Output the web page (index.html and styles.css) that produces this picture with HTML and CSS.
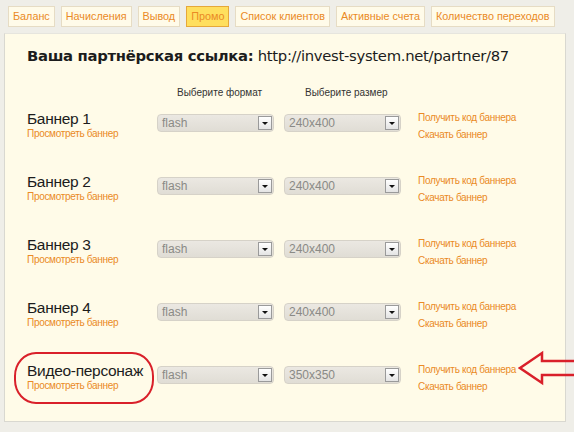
FILE: index.html
```html
<!DOCTYPE html>
<html lang="ru">

<head>
    <meta charset="UTF-8">
    <meta name="viewport" content="width=device-width, initial-scale=1.0">
    <title>Промо</title>
    <link rel="stylesheet" href="styles.css">
</head>

<body>
    <nav class="tabs">
        <a class="tab" href="#">Баланс</a>
        <a class="tab" href="#">Начисления</a>
        <a class="tab" href="#">Вывод</a>
        <a class="tab active" href="#">Промо</a>
        <a class="tab" href="#">Список клиентов</a>
        <a class="tab" href="#">Активные счета</a>
        <a class="tab" href="#">Количество переходов</a>
    </nav>
    <section class="panel">
        <h2 class="partner"><b>Ваша партнёрская ссылка:</b> http://invest-system.net/partner/87</h2>
        <div class="heads">
            <span class="head">Выберите формат</span>
            <span class="head">Выберите размер</span>
        </div>

        <div class="banner">
            <div class="name">
                <h3>Баннер 1</h3>
                <a href="#">Просмотреть баннер</a>
            </div>
            <div class="select"><span>flash</span><i class="btn"></i></div>
            <div class="select"><span>240x400</span><i class="btn"></i></div>
            <div class="links">
                <a href="#">Получить код баннера</a>
                <a href="#">Скачать баннер</a>
            </div>
        </div>

        <div class="banner">
            <div class="name">
                <h3>Баннер 2</h3>
                <a href="#">Просмотреть баннер</a>
            </div>
            <div class="select"><span>flash</span><i class="btn"></i></div>
            <div class="select"><span>240x400</span><i class="btn"></i></div>
            <div class="links">
                <a href="#">Получить код баннера</a>
                <a href="#">Скачать баннер</a>
            </div>
        </div>

        <div class="banner">
            <div class="name">
                <h3>Баннер 3</h3>
                <a href="#">Просмотреть баннер</a>
            </div>
            <div class="select"><span>flash</span><i class="btn"></i></div>
            <div class="select"><span>240x400</span><i class="btn"></i></div>
            <div class="links">
                <a href="#">Получить код баннера</a>
                <a href="#">Скачать баннер</a>
            </div>
        </div>

        <div class="banner">
            <div class="name">
                <h3>Баннер 4</h3>
                <a href="#">Просмотреть баннер</a>
            </div>
            <div class="select"><span>flash</span><i class="btn"></i></div>
            <div class="select"><span>240x400</span><i class="btn"></i></div>
            <div class="links">
                <a href="#">Получить код баннера</a>
                <a href="#">Скачать баннер</a>
            </div>
        </div>

        <div class="banner marked">
            <div class="name">
                <h3>Видео-персонаж</h3>
                <a href="#">Просмотреть баннер</a>
            </div>
            <div class="select"><span>flash</span><i class="btn"></i></div>
            <div class="select"><span>350x350</span><i class="btn"></i></div>
            <div class="links">
                <a href="#">Получить код баннера</a>
                <a href="#">Скачать баннер</a>
            </div>
            <svg class="arrow" width="60" height="36" viewBox="0 0 60 36">
                <path d="M2 18 L24 3 L24 11 L60 11 L60 25 L24 25 L24 33 Z" fill="none" stroke="#d9202a" stroke-width="2.5" stroke-linejoin="miter"/>
            </svg>
        </div>
    </section>
</body>

</html>
```

FILE: styles.css
```css
* {
    padding: 0;
    margin: 0;
    box-sizing: border-box;
}

body {
    width: 574px;
    height: 432px;
    overflow: hidden;
    background-color: #efeee8;
    font-family: "Liberation Sans", sans-serif;
    color: #222;
}

a {
    text-decoration: none;
    color: #ea8a25;
}

.tabs {
    display: flex;
    gap: 6px;
    padding: 6px 0 0 8px;
    height: 33px;
}

.tab {
    height: 21px;
    line-height: 19px;
    padding: 0 4px;
    font-size: 10.8px;
    white-space: nowrap;
    color: #ea8a25;
    background-color: #fffbe9;
    border: 1px solid #e6dcc4;
}

.tab.active {
    background-color: #ffdf5e;
    border-color: #e6a83a;
}

.panel {
    margin: 0 8px 0 4px;
    height: 389px;
    background-color: #fffbe8;
    border: 1px solid #d9d8d0;
    border-top-color: #e6e5de;
    padding: 12px 0 0 22px;
}

.partner {
    font-family: "DejaVu Sans", sans-serif;
    font-size: 14.8px;
    font-weight: normal;
    letter-spacing: -0.3px;
    line-height: 20px;
    color: #1c1c1c;
}

.partner b {
    font-weight: 700;
}

.heads {
    display: flex;
    padding: 21px 0 0 150px;
    height: 44px;
}

.head {
    width: 128px;
    font-size: 10px;
    color: #333;
}

.banner {
    position: relative;
    display: grid;
    grid-template-columns: 130px 127px 134px auto;
    height: 63px;
    align-items: start;
}

.name h3 {
    font-weight: normal;
    font-size: 15.5px;
    letter-spacing: -0.3px;
    line-height: 17px;
    color: #1c1c1c;
    white-space: nowrap;
}

.name a,
.links a {
    display: block;
    font-size: 10px;
    letter-spacing: -0.3px;
    line-height: 13px;
}

.select {
    display: flex;
    align-items: center;
    justify-content: space-between;
    width: 117px;
    height: 18px;
    margin-top: 4px;
    padding: 0 1px 0 4px;
    border: 1px solid #d6d2c8;
    border-radius: 4px;
    background: linear-gradient(#ebe8e2, #e0ddd5);
    font-size: 12px;
    color: #8a8a86;
}

.btn {
    position: relative;
    width: 14px;
    height: 14px;
    border: 1px solid #9a9a9a;
    background: linear-gradient(#ffffff, #e4e4e4);
}

.btn::after {
    content: "";
    position: absolute;
    left: 3px;
    top: 5px;
    border-left: 3px solid transparent;
    border-right: 3px solid transparent;
    border-top: 3px solid #111;
}

.links {
    display: flex;
    flex-direction: column;
    gap: 4px;
    padding-top: 1px;
}

.marked .name {
    position: relative;
}

.marked .name::before {
    content: "";
    position: absolute;
    left: -13px;
    top: -10px;
    width: 136px;
    height: 48px;
    border: 2px solid #d9202a;
    border-radius: 22px / 24px;
}

.arrow {
    position: absolute;
    left: 491px;
    top: -12px;
}
```
